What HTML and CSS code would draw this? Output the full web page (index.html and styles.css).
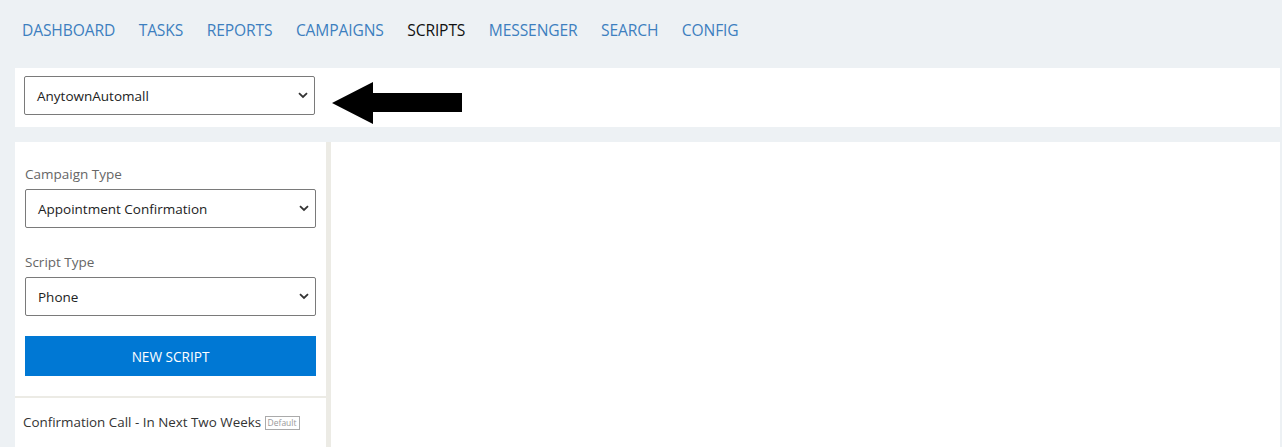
FILE: index.html
```html
<!DOCTYPE html>
<html>
<head>
<meta charset="utf-8">
<link rel="stylesheet" href="styles.css">
</head>
<body>
<nav class="nav">
  <a class="nav-item">DASHBOARD</a>
  <a class="nav-item">TASKS</a>
  <a class="nav-item">REPORTS</a>
  <a class="nav-item">CAMPAIGNS</a>
  <a class="nav-item active">SCRIPTS</a>
  <a class="nav-item">MESSENGER</a>
  <a class="nav-item">SEARCH</a>
  <a class="nav-item">CONFIG</a>
</nav>
<div class="topbar">
  <div class="select wide"><span>AnytownAutomall</span><svg class="chev" width="10" height="7" viewBox="0 0 10 7"><path d="M1 1.2 L5 5 L9 1.2" fill="none" stroke="#333" stroke-width="1.8"/></svg></div>
  <svg class="arrow" width="131" height="43" viewBox="0 0 131 43"><polygon points="0,21 41,0 41,11 130,11 130,30 41,30 41,42" fill="#000"/></svg>
</div>
<div class="main">
  <aside class="side">
    <div class="form">
      <div class="label">Campaign Type</div>
      <div class="select"><span>Appointment Confirmation</span><svg class="chev" width="10" height="7" viewBox="0 0 10 7"><path d="M1 1.2 L5 5 L9 1.2" fill="none" stroke="#333" stroke-width="1.8"/></svg></div>
      <div class="label second">Script Type</div>
      <div class="select"><span>Phone</span><svg class="chev" width="10" height="7" viewBox="0 0 10 7"><path d="M1 1.2 L5 5 L9 1.2" fill="none" stroke="#333" stroke-width="1.8"/></svg></div>
      <button class="btn">NEW SCRIPT</button>
    </div>
    <div class="list">
      <div class="list-item">Confirmation Call - In Next Two Weeks <span class="badge">Default</span></div>
    </div>
  </aside>
  <section class="content"></section>
</div>
</body>
</html>
```
FILE: styles.css
```css
* { box-sizing: border-box; }
html, body { margin: 0; padding: 0; }
body {
  background: #edf1f4;
  font-family: "Open Sans", "Noto Sans", sans-serif;
  color: #333;
  height: 447px;
  overflow: hidden;
}
.nav {
  display: flex;
  gap: 23.5px;
  padding: 18px 0 0 22px;
  height: 68px;
}
.nav-item {
  font-size: 15.6px;
  color: #3d7fbf;
  letter-spacing: -0.12px;
  line-height: 24px;
}
.nav-item.active { color: #111; }
.topbar {
  margin-left: 15px;
  margin-right: 2px;
  height: 59px;
  background: #fff;
  display: flex;
  align-items: flex-start;
  padding: 8px 0 0 9px;
  gap: 17px;
}
.select {
  display: flex;
  align-items: center;
  justify-content: space-between;
  height: 39px;
  border: 1px solid #7a7a7a;
  border-radius: 2px;
  padding: 0 6px 0 12px;
  font-size: 13.5px;
  color: #222;
  background: #fff;
}
.select.wide { width: 291px; }
.arrow { margin-top: 6px; }
.main {
  display: flex;
  margin: 15px 2px 0 15px;
  height: 305px;
}
.side {
  width: 316px;
  background: #fff;
  border-right: 5px solid #ecebe5;
  display: flex;
  flex-direction: column;
}
.form {
  padding: 23px 10px 20px 10px;
  border-bottom: 2px solid #ecebe5;
}
.label {
  font-size: 13.5px;
  color: #666;
  line-height: 18px;
  margin-bottom: 6px;
}
.label.second { margin-top: 25px; }
.btn {
  display: block;
  width: 100%;
  height: 40px;
  margin-top: 20px;
  border: none;
  background: #0078d4;
  color: #fff;
  font-family: inherit;
  font-size: 13.6px;
  padding: 0;
}
.list { padding: 15px 8px; }
.list-item {
  font-size: 13.4px;
  color: #333;
  line-height: 18px;
  white-space: nowrap;
}
.badge {
  display: inline-block;
  font-size: 8.5px;
  color: #999;
  border: 1px solid #aaa;
  padding: 0 2px;
  line-height: 12px;
  vertical-align: 1px;
}
.content {
  flex: 1;
  background: #fff;
}
```
